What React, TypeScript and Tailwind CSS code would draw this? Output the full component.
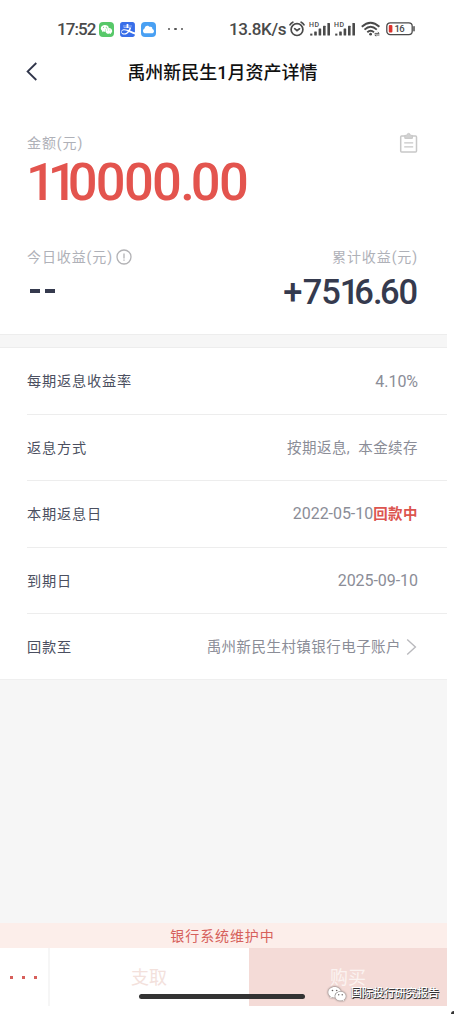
import { AiFillWechat } from "react-icons/ai";
import { SiAlipay } from "react-icons/si";
import { FaCloud } from "react-icons/fa";


type DetailRowProps = {
    label: string,
    value: string,
    status?: string,
    arrow?: boolean,
    last?: boolean
}


const SignalIcon = () => (
    <svg width="23" height="16" viewBox="0 0 23 16" fill="#4a4a4a">
        <text x="0" y="5.6" fontSize="7" fontWeight="500" fontFamily="Roboto, sans-serif" textLength="10">HD</text>
        <rect x="1.2" y="12.6" width="2.2" height="2" />
        <rect x="5.2" y="10.4" width="2.6" height="4.2" rx=".5" />
        <rect x="9.6" y="7.6" width="2.6" height="7" rx=".5" />
        <rect x="14" y="4.8" width="2.6" height="9.8" rx=".5" />
        <rect x="18.4" y="2" width="2.6" height="12.6" rx=".5" />
    </svg>
);

const AlarmIcon = () => (
    <svg width="16" height="16" viewBox="0 0 16 16" fill="none" stroke="#4a4a4a" strokeWidth="1.7" strokeLinecap="round">
        <circle cx="8" cy="8.6" r="5.9" />
        <path d="M5.7 7.7L8 9.6l2.5-1.8M1 3.8Q2 2 3.8 1.2M15 3.8Q14 2 12.2 1.2" />
    </svg>
);

const WifiIcon = () => (
    <svg width="20" height="16" viewBox="0 0 20 16" fill="none" stroke="#4a4a4a" strokeWidth="1.9">
        <path d="M.8 5.8Q9.5-2.2 18.4 5.8M3.5 8.6Q9.6 3 15.8 8.6M6.3 11.2Q9.6 8.2 13 11.2" />
        <circle cx="9.6" cy="13.2" r="1.4" fill="#4a4a4a" stroke="none" />
        <path d="M13.6 12.4h4.6l-1.4-1.3M18.4 14h-4.6l1.4 1.2" strokeWidth=".9" />
    </svg>
);

const BatteryIcon = () => (
    <svg width="30" height="14" viewBox="0 0 30 14">
        <rect x=".8" y=".8" width="25.4" height="11.8" rx="3.4" fill="none" stroke="#4a4a4a" strokeWidth="1.3" />
        <rect x="2.8" y="3" width="3.6" height="7.6" rx="1" fill="#dd342e" />
        <path d="M28 4.8v4" stroke="#4a4a4a" strokeWidth="1.5" strokeLinecap="round" />
        <text x="8.6" y="10.2" fontSize="9.5" fontWeight="500" fontFamily="Roboto, sans-serif" fill="#4a4a4a" textLength="10">16</text>
    </svg>
);

const ClipboardIcon = () => (
    <svg width="20" height="22" viewBox="0 0 20 22" fill="none" stroke="#c8c8c8" strokeWidth="1.5">
        <path d="M6 4H2.6Q1.7 4 1.7 5v14q0 1 .9 1h14q.9 0 .9-1V5q0-1-.9-1H13" />
        <path d="M5.8 3.4h2q.2-2 1.8-2t1.8 2h2v3H5.8z" fill="#d2d2d2" strokeWidth="1" />
        <path d="M5.2 10.8h9M5.2 14.8h9" strokeWidth="1.2" />
    </svg>
);

const StatusBar = () => (
    <div className="flex h-[58px] items-center pl-[57px] pr-[31px] font-['Roboto'] text-[17px] font-medium text-[#4a4a4a]">
        <span className="w-[42px] pt-[1px] tracking-[-0.9px]">17:52</span>
        <span className="flex size-[15px] items-center justify-center rounded-[4px] bg-[#57c869]">
            <AiFillWechat size={13} color="#fff" />
        </span>
        <SiAlipay className="ml-[6px]" size={15} color="#386ee9" />
        <span className="ml-[6px] flex size-[15px] items-center justify-center rounded-[4px] bg-[#49a0f3]">
            <FaCloud size={11} color="#fff" />
        </span>
        <span className="ml-[12px] flex gap-[4px]">
            <i className="size-[2.4px] rounded-full bg-[#555]" />
            <i className="size-[2.4px] rounded-full bg-[#555]" />
            <i className="size-[2.4px] rounded-full bg-[#555]" />
        </span>
        <div className="ml-auto flex items-center">
            <span className="mr-[3px] pt-[1px] tracking-[-0.4px]">13.8K/s</span>
            <AlarmIcon />
            <span className="ml-[4px] flex gap-[2px]"><SignalIcon /><SignalIcon /></span>
            <span className="ml-[4px]"><WifiIcon /></span>
            <span className="ml-[5px]"><BatteryIcon /></span>
        </div>
    </div>
);

const DetailRow = ({ label, value, status, arrow, last }: DetailRowProps) => {
    return (
        <div className={last ? "pl-[27px]" : "ml-[27px] border-b border-[#ededed]"}>
            <div className="flex h-[65.4px] items-center justify-between pr-[29px] pt-[1px]">
                <span className="pt-[1px] text-[14.2px] tracking-[0.8px] text-[#4b4f60]">{label}</span>
                <span className="flex items-center text-[14.5px] tracking-[0.45px] text-[#8b8d97]">
                    <span className={/^\d/.test(value) ? "text-[16px] tracking-[-0.05px]" : "pt-[2px] [word-spacing:4px]"}>{value}</span>
                    {status && <b className="pt-[1px] text-[#dc554f]">{status}</b>}
                    {arrow && (
                        <svg className="ml-[5px] mr-[1px]" width="11" height="18" viewBox="0 0 11 18" fill="none" stroke="#b9b9bd" strokeWidth="1.4">
                            <path d="M1.2 1.6L9.4 9l-8.2 7.5" />
                        </svg>
                    )}
                </span>
            </div>
        </div>
    );
};

const App = () => {
    return (
        <div className="h-[1014px] w-[454px] overflow-hidden bg-white font-['Roboto','Noto_Sans_CJK_SC',sans-serif] whitespace-nowrap">
            <div className="relative flex h-[1006px] w-[447px] flex-col">
                <StatusBar />
                <header className="relative flex h-[28px] items-center justify-center text-[18px] font-medium text-[#111]">
                    <svg className="absolute left-[26px] top-[4px]" width="12" height="19" viewBox="0 0 12 19" fill="none" stroke="#30354a" strokeWidth="1.8">
                        <path d="M10.3 1L1.6 9.5l8.7 8.5" />
                    </svg>
                    <h1 className="mr-[2px]">禹州新民生1月资产详情</h1>
                </header>

                <section className="h-[248px] shrink-0 px-[27px] pt-[46px]">
                    <div className="flex h-[22px] items-center justify-between pr-[1px] text-[14px] tracking-[0.9px] text-[#afb1b8]">
                        <span>金额(元)</span>
                        <ClipboardIcon />
                    </div>
                    <p className="-ml-[1px] h-[58px] text-[52.5px] font-medium leading-[57px] tracking-[-1.7px] text-[#e3544e]">
                        <span className="tracking-[-8px]">11</span>
                        <span className="-ml-[2px]">0000</span>
                        <span className="tracking-[-4px]">.</span>
                        <span>00</span>
                    </p>
                    <div className="mt-[34px] flex h-[22px] items-center justify-between pr-[2px] text-[14px] tracking-[0.9px] text-[#afb1b8]">
                        <span className="flex items-center">
                            今日收益(元)
                            <svg className="ml-[3px]" width="16" height="16" viewBox="0 0 16 16" fill="none" stroke="#b2b2b5" strokeWidth="1.3">
                                <circle cx="8" cy="8" r="7" />
                                <path d="M8 4.4v5M8 10.4v1.4" />
                            </svg>
                        </span>
                        <span>累计收益(元)</span>
                    </div>
                    <div className="mt-[2px] flex h-[42px] items-center justify-between pr-[3px] text-[#353a4e]">
                        <span className="flex gap-[5px] pl-[3px]">
                            <i className="h-[4px] w-[10px] bg-current" />
                            <i className="h-[4px] w-[10px] bg-current" />
                        </span>
                        <span className="pt-[2px] text-[34.5px] font-medium leading-[42px] tracking-[-1.1px]">
                            <span className="mr-[1.5px]">+</span>
                            <span>75</span>
                            <span className="tracking-[-5px]">1</span>
                            <span>6</span>
                            <span className="tracking-[-2.5px]">.</span>
                            <span>60</span>
                        </span>
                    </div>
                </section>

                <div className="h-[14.4px] shrink-0 border-y border-[#ededed] bg-[#f6f6f6]" />

                <section className="shrink-0">
                    <DetailRow label="每期返息收益率" value="4.10%" />
                    <DetailRow label="返息方式" value="按期返息, 本金续存" />
                    <DetailRow label="本期返息日" value="2022-05-10" status="回款中" />
                    <DetailRow label="到期日" value="2025-09-10" />
                    <DetailRow label="回款至" value="禹州新民生村镇银行电子账户" arrow last />
                </section>

                <div className="flex-1 border-t border-[#efefef] bg-[#f6f6f6]" />

                <div className="flex h-[25px] shrink-0 items-center justify-center bg-[#fceeea] pr-[2px] pt-[2px] text-[14px] tracking-[0.9px] text-[#d6605b]">
                    银行系统维护中
                </div>
                <footer className="flex h-[58px] shrink-0 text-[18px]">
                    <div className="flex w-[50px] items-center justify-center gap-[9px] border-r-2 border-[#f6f6f6] pr-[1px]">
                        <i className="size-[3px] bg-[#d75f5b]" />
                        <i className="size-[3px] bg-[#d75f5b]" />
                        <i className="size-[3px] bg-[#d75f5b]" />
                    </div>
                    <div className="flex w-[199px] items-center justify-center pr-[1px] text-[#f3e1dc]">支取</div>
                    <div className="flex flex-1 items-center justify-center bg-[#f4dbd7] text-[#fbf3f1]">购买</div>
                </footer>

                <div className="absolute left-[139px] top-[994px] h-[5px] w-[166px] rounded-full bg-[#333]" />
                {/* account watermark */}
                <div className="absolute left-[327px] top-[984px] flex h-[20px] items-center text-[11px] font-medium text-white">
                    <AiFillWechat className="mr-[4px] drop-shadow-[0_0_1px_#444]" size={20} />
                    <span className="[text-shadow:1px_1px_0_#333,0_1px_1px_#555]">国际投行研究报告</span>
                </div>
            </div>
            <div className="ml-auto mt-[5px] size-[3px] rounded-tl-full bg-[#333]" />
        </div>
    );
};

export default App;
